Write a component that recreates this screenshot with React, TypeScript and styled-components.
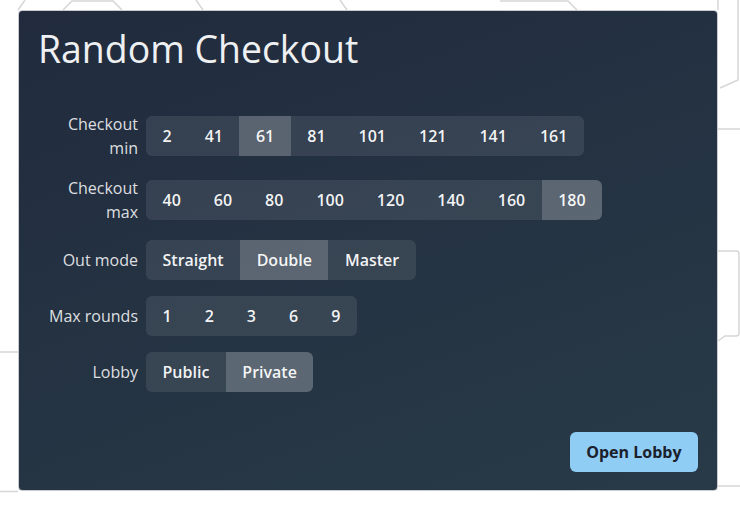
import styled, { createGlobalStyle } from "styled-components";

const GlobalStyle = createGlobalStyle`
  html, body {
    margin: 0;
    padding: 0;
    background: #ffffff;
    font-family: "Open Sans", "Noto Sans", "Liberation Sans", sans-serif;
  }
`;

type Option = { label: string; active?: boolean };

const rows: { label: string; options: Option[] }[] = [
  {
    label: "Checkout min",
    options: ["2", "41", "61", "81", "101", "121", "141", "161"].map((v) => ({
      label: v,
      active: v === "61",
    })),
  },
  {
    label: "Checkout max",
    options: ["40", "60", "80", "100", "120", "140", "160", "180"].map(
      (v) => ({ label: v, active: v === "180" })
    ),
  },
  {
    label: "Out mode",
    options: ["Straight", "Double", "Master"].map((v) => ({
      label: v,
      active: v === "Double",
    })),
  },
  {
    label: "Max rounds",
    options: ["1", "2", "3", "6", "9"].map((v) => ({ label: v })),
  },
  {
    label: "Lobby",
    options: ["Public", "Private"].map((v) => ({
      label: v,
      active: v === "Private",
    })),
  },
];

const BackdropLines = () => (
  <Backdrop width="740" height="515" viewBox="0 0 740 515">
    <g fill="none" stroke="#d6d6d6" strokeWidth="1.5">
      <path d="M18 10 L25 0" />
      <path d="M63 10 L72 1 L113 1 L122 10" />
      <path d="M196 0 L203 10" />
      <path d="M340 0 L347 10" />
      <path d="M500 1 L568 1 L577 10" />
      <path d="M718 0 L718 10" />
      <path d="M720 88 L738 80 L738 0" />
      <path d="M718 129 L740 129" />
      <path d="M718 251 L736 251 Q739 251 739 254 L739 333 Q739 336 736 336 L725 336 L718 341" />
      <path d="M718 486 L740 486" />
      <path d="M0 352 L18 352" />
      <path d="M0 491.5 L18 491.5" />
    </g>
  </Backdrop>
);

const App: React.FC = () => {
  return (
    <>
      <GlobalStyle />
      <Page>
        <BackdropLines />
        <Card>
          <Title>{"Random Checkout"}</Title>
          <Form>
            {rows.map((row) => (
              <Row key={row.label}>
                <Label>{row.label}</Label>
                <Group>
                  {row.options.map((opt) => (
                    <Segment key={opt.label} $active={opt.active}>
                      {opt.label}
                    </Segment>
                  ))}
                </Group>
              </Row>
            ))}
          </Form>
          <Footer>
            <PrimaryButton>{"Open Lobby"}</PrimaryButton>
          </Footer>
        </Card>
      </Page>
    </>
  );
};

const Page = styled.div`
  position: relative;
  width: 740px;
  height: 515px;
  padding: 10px 0 0 18px;
  box-sizing: border-box;
  overflow: hidden;
`;

const Backdrop = styled.svg`
  position: absolute;
  left: 0;
  top: 0;
  z-index: 0;
`;

const Card = styled.div`
  position: relative;
  z-index: 1;
  width: 700px;
  height: 481px;
  box-sizing: border-box;
  border: 1px solid #c9cbce;
  border-radius: 4px;
  padding: 16px 19px 18px 19px;
  display: flex;
  flex-direction: column;
  background: linear-gradient(160deg, #212b3d 0%, #243242 45%, #283a47 100%);
`;

const Title = styled.h1`
  margin: 0 0 41px 0;
  font-size: 37.4px;
  line-height: 44px;
  font-weight: 400;
  color: #eef0f2;
`;

const Form = styled.div`
  display: flex;
  flex-direction: column;
  gap: 16px;
`;

const Row = styled.div`
  display: flex;
  align-items: center;
  gap: 8px;
`;

const Label = styled.div`
  width: 100px;
  flex-shrink: 0;
  text-align: right;
  font-size: 16px;
  line-height: 24px;
  color: rgba(255, 255, 255, 0.86);
`;

const Group = styled.div`
  display: inline-flex;
  height: 40px;
  border-radius: 6px;
  overflow: hidden;
`;

const Segment = styled.button<{ $active?: boolean }>`
  border: none;
  margin: 0;
  height: 40px;
  padding: 0 16.5px;
  font-family: inherit;
  font-size: 16px;
  font-weight: 600;
  color: rgba(255, 255, 255, 0.94);
  background: ${({ $active }) =>
    $active ? "rgba(255, 255, 255, 0.25)" : "rgba(255, 255, 255, 0.09)"};
  cursor: pointer;
`;

const Footer = styled.div`
  margin-top: auto;
  display: flex;
  justify-content: flex-end;
`;

const PrimaryButton = styled.button`
  border: none;
  height: 40px;
  padding: 0 16.5px;
  border-radius: 6px;
  background: #90cdf4;
  color: #1a202c;
  font-family: inherit;
  font-size: 16px;
  font-weight: 700;
  cursor: pointer;
`;

export default App;
